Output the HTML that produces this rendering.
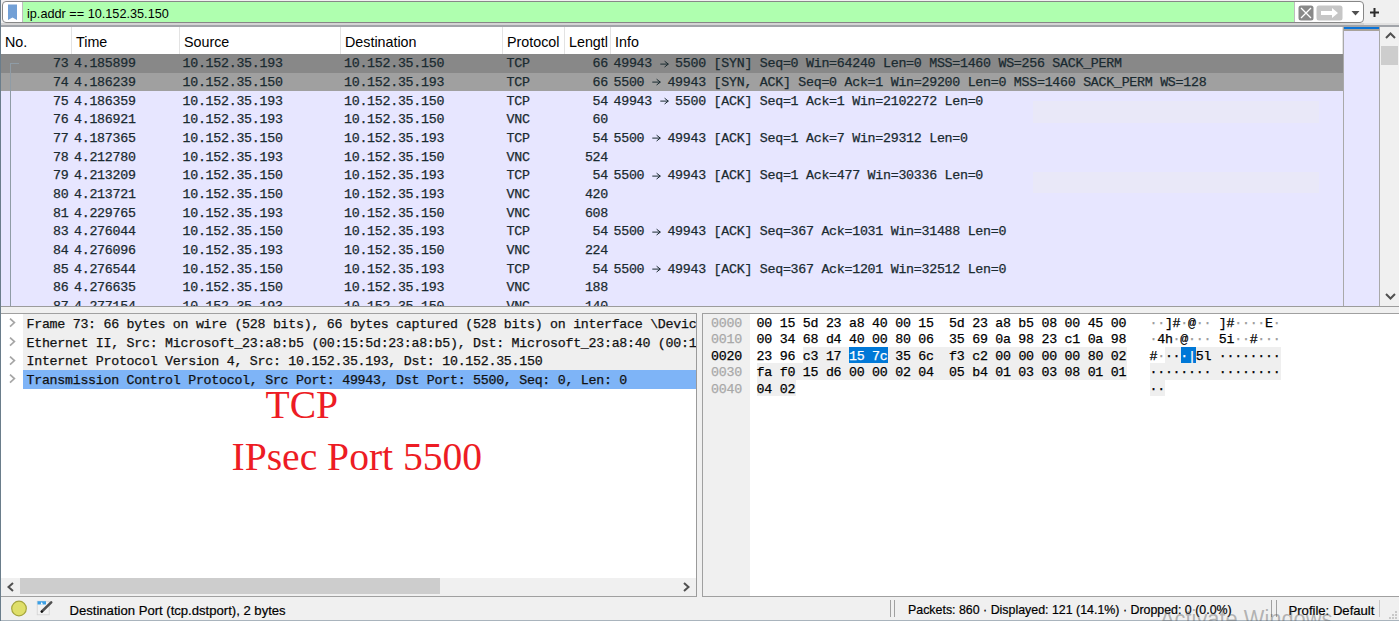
<!DOCTYPE html><html><head><meta charset="utf-8"><style>
*{margin:0;padding:0;box-sizing:border-box}
html,body{width:1399px;height:621px;overflow:hidden;background:#f0f0f0;position:relative}
body{font-family:"Liberation Sans",sans-serif;color:#000}
.a{position:absolute}
.m{position:absolute;font-family:"Liberation Mono",monospace;font-size:13.3px;white-space:pre;color:#1a2a30;letter-spacing:-0.28px;-webkit-text-stroke:0.25px currentColor}
.hc{position:absolute;top:0;height:27px;border-right:1px solid #e3e3e3;font-size:14.3px;line-height:31px;padding-left:4px;white-space:pre;overflow:hidden;color:#000}
.sb{position:absolute;font-size:13px;white-space:pre;color:#000;-webkit-text-stroke:0.2px currentColor}
</style></head><body>
<div class="a" style="left:0;top:0;width:1px;height:621px;background:#6a7d8b;z-index:5"></div>
<div class="a" style="left:2px;top:1px;width:1362px;height:22px;border:1px solid #878787;border-radius:4px;background:#fff;overflow:hidden">
<svg class="a" style="left:3.9px;top:1.8px" width="11" height="17" viewBox="0 0 11 17"><path d="M1 0.5 H10 V16 L5.5 13.4 L1 16 Z" fill="#72a0d6"/></svg>
<div class="a" style="left:19px;top:0;width:1273px;height:21px;background:#afffaf;border-left:1px solid #bdbdbd;border-right:1px solid #bdbdbd"></div>
<div class="a" style="left:24px;top:4.5px;font-size:12.7px;line-height:14px;white-space:pre;color:#000">ip.addr == 10.152.35.150</div>
<svg class="a" style="left:1295px;top:2.5px" width="16" height="16" viewBox="0 0 16 16"><rect x="0.5" y="0.5" width="15" height="15" rx="2.5" fill="#898989"/><path d="M3 3 L13 13 M13 3 L3 13" stroke="#fff" stroke-width="1.3"/></svg>
<svg class="a" style="left:1313px;top:2.5px" width="27" height="16" viewBox="0 0 27 16"><rect x="0.5" y="0.5" width="26" height="15" rx="2.5" fill="#c6c6c6"/><path d="M5 6 H16 V3 L22 8 L16 13 V10 H5 Z" fill="#fff"/></svg>
<svg class="a" style="left:1348px;top:8.5px" width="9" height="5" viewBox="0 0 9 5"><path d="M0.5 0 H8.5 L4.5 4.5 Z" fill="#505050"/></svg>
</div>
<svg class="a" style="left:1369px;top:7px" width="11" height="11" viewBox="0 0 11 11"><path d="M5.5 1 V10 M1 5.5 H10" stroke="#2b2b2b" stroke-width="2"/></svg>
<div class="a" style="left:1px;top:23px;width:1363px;height:2px;background:#d4d4d4"></div>
<div class="a" style="left:1364px;top:23px;width:35px;height:2px;background:#e2e2e2"></div>
<div class="a" style="left:1px;top:25px;width:1398px;height:282px;border-top:2px solid #a1a4a9;border-bottom:1px solid #9c9c9c;background:#e7e6ff;overflow:hidden">
<div class="a" style="left:0;top:0;width:1342px;height:27px;background:#fff">
<div class="hc" style="left:0px;width:71px">No.</div>
<div class="hc" style="left:71px;width:108px">Time</div>
<div class="hc" style="left:179px;width:161px">Source</div>
<div class="hc" style="left:340px;width:162px">Destination</div>
<div class="hc" style="left:502px;width:62px">Protocol</div>
<div class="hc" style="left:564px;width:46px">Lengtl</div>
<div class="hc" style="left:610px;width:732px">Info</div>
</div>
<div class="a" style="left:0;top:27.00px;width:1342px;height:18.69px;background:#888888;line-height:18.69px">
<div class="m" style="right:1274.5px;top:1.2px">73</div>
<div class="m" style="left:73.0px;top:1.2px">4.185899</div>
<div class="m" style="left:181.5px;top:1.2px">10.152.35.193</div>
<div class="m" style="left:343.0px;top:1.2px">10.152.35.150</div>
<div class="m" style="left:505.5px;top:1.2px">TCP</div>
<div class="m" style="right:735.0px;top:1.2px">66</div>
<div class="m" style="left:612.5px;top:1.2px">49943   5500 [SYN] Seq=0 Win=64240 Len=0 MSS=1460 WS=256 SACK_PERM</div>
<svg class="a" style="left:658.80px;top:5.6px" width="10" height="8" viewBox="0 0 10 8"><path d="M0.3 4.1 H8.3 M4.6 1.2 L8.3 4.1 L4.6 7" stroke="#1a2a30" stroke-width="1.0" fill="none"/></svg>
</div>
<div class="a" style="left:0;top:45.69px;width:1342px;height:18.69px;background:#a0a0a0;line-height:18.69px">
<div class="m" style="right:1274.5px;top:1.2px">74</div>
<div class="m" style="left:73.0px;top:1.2px">4.186239</div>
<div class="m" style="left:181.5px;top:1.2px">10.152.35.150</div>
<div class="m" style="left:343.0px;top:1.2px">10.152.35.193</div>
<div class="m" style="left:505.5px;top:1.2px">TCP</div>
<div class="m" style="right:735.0px;top:1.2px">66</div>
<div class="m" style="left:612.5px;top:1.2px">5500   49943 [SYN, ACK] Seq=0 Ack=1 Win=29200 Len=0 MSS=1460 SACK_PERM WS=128</div>
<svg class="a" style="left:651.10px;top:5.6px" width="10" height="8" viewBox="0 0 10 8"><path d="M0.3 4.1 H8.3 M4.6 1.2 L8.3 4.1 L4.6 7" stroke="#1a2a30" stroke-width="1.0" fill="none"/></svg>
</div>
<div class="a" style="left:0;top:64.38px;width:1342px;height:18.69px;background:transparent;line-height:18.69px">
<div class="m" style="right:1274.5px;top:1.2px">75</div>
<div class="m" style="left:73.0px;top:1.2px">4.186359</div>
<div class="m" style="left:181.5px;top:1.2px">10.152.35.193</div>
<div class="m" style="left:343.0px;top:1.2px">10.152.35.150</div>
<div class="m" style="left:505.5px;top:1.2px">TCP</div>
<div class="m" style="right:735.0px;top:1.2px">54</div>
<div class="m" style="left:612.5px;top:1.2px">49943   5500 [ACK] Seq=1 Ack=1 Win=2102272 Len=0</div>
<svg class="a" style="left:658.80px;top:5.6px" width="10" height="8" viewBox="0 0 10 8"><path d="M0.3 4.1 H8.3 M4.6 1.2 L8.3 4.1 L4.6 7" stroke="#1a2a30" stroke-width="1.0" fill="none"/></svg>
</div>
<div class="a" style="left:0;top:83.07px;width:1342px;height:18.69px;background:transparent;line-height:18.69px">
<div class="m" style="right:1274.5px;top:1.2px">76</div>
<div class="m" style="left:73.0px;top:1.2px">4.186921</div>
<div class="m" style="left:181.5px;top:1.2px">10.152.35.193</div>
<div class="m" style="left:343.0px;top:1.2px">10.152.35.150</div>
<div class="m" style="left:505.5px;top:1.2px">VNC</div>
<div class="m" style="right:735.0px;top:1.2px">60</div>
</div>
<div class="a" style="left:0;top:101.76px;width:1342px;height:18.69px;background:transparent;line-height:18.69px">
<div class="m" style="right:1274.5px;top:1.2px">77</div>
<div class="m" style="left:73.0px;top:1.2px">4.187365</div>
<div class="m" style="left:181.5px;top:1.2px">10.152.35.150</div>
<div class="m" style="left:343.0px;top:1.2px">10.152.35.193</div>
<div class="m" style="left:505.5px;top:1.2px">TCP</div>
<div class="m" style="right:735.0px;top:1.2px">54</div>
<div class="m" style="left:612.5px;top:1.2px">5500   49943 [ACK] Seq=1 Ack=7 Win=29312 Len=0</div>
<svg class="a" style="left:651.10px;top:5.6px" width="10" height="8" viewBox="0 0 10 8"><path d="M0.3 4.1 H8.3 M4.6 1.2 L8.3 4.1 L4.6 7" stroke="#1a2a30" stroke-width="1.0" fill="none"/></svg>
</div>
<div class="a" style="left:0;top:120.45px;width:1342px;height:18.69px;background:transparent;line-height:18.69px">
<div class="m" style="right:1274.5px;top:1.2px">78</div>
<div class="m" style="left:73.0px;top:1.2px">4.212780</div>
<div class="m" style="left:181.5px;top:1.2px">10.152.35.193</div>
<div class="m" style="left:343.0px;top:1.2px">10.152.35.150</div>
<div class="m" style="left:505.5px;top:1.2px">VNC</div>
<div class="m" style="right:735.0px;top:1.2px">524</div>
</div>
<div class="a" style="left:0;top:139.14px;width:1342px;height:18.69px;background:transparent;line-height:18.69px">
<div class="m" style="right:1274.5px;top:1.2px">79</div>
<div class="m" style="left:73.0px;top:1.2px">4.213209</div>
<div class="m" style="left:181.5px;top:1.2px">10.152.35.150</div>
<div class="m" style="left:343.0px;top:1.2px">10.152.35.193</div>
<div class="m" style="left:505.5px;top:1.2px">TCP</div>
<div class="m" style="right:735.0px;top:1.2px">54</div>
<div class="m" style="left:612.5px;top:1.2px">5500   49943 [ACK] Seq=1 Ack=477 Win=30336 Len=0</div>
<svg class="a" style="left:651.10px;top:5.6px" width="10" height="8" viewBox="0 0 10 8"><path d="M0.3 4.1 H8.3 M4.6 1.2 L8.3 4.1 L4.6 7" stroke="#1a2a30" stroke-width="1.0" fill="none"/></svg>
</div>
<div class="a" style="left:0;top:157.83px;width:1342px;height:18.69px;background:transparent;line-height:18.69px">
<div class="m" style="right:1274.5px;top:1.2px">80</div>
<div class="m" style="left:73.0px;top:1.2px">4.213721</div>
<div class="m" style="left:181.5px;top:1.2px">10.152.35.150</div>
<div class="m" style="left:343.0px;top:1.2px">10.152.35.193</div>
<div class="m" style="left:505.5px;top:1.2px">VNC</div>
<div class="m" style="right:735.0px;top:1.2px">420</div>
</div>
<div class="a" style="left:0;top:176.52px;width:1342px;height:18.69px;background:transparent;line-height:18.69px">
<div class="m" style="right:1274.5px;top:1.2px">81</div>
<div class="m" style="left:73.0px;top:1.2px">4.229765</div>
<div class="m" style="left:181.5px;top:1.2px">10.152.35.193</div>
<div class="m" style="left:343.0px;top:1.2px">10.152.35.150</div>
<div class="m" style="left:505.5px;top:1.2px">VNC</div>
<div class="m" style="right:735.0px;top:1.2px">608</div>
</div>
<div class="a" style="left:0;top:195.21px;width:1342px;height:18.69px;background:transparent;line-height:18.69px">
<div class="m" style="right:1274.5px;top:1.2px">83</div>
<div class="m" style="left:73.0px;top:1.2px">4.276044</div>
<div class="m" style="left:181.5px;top:1.2px">10.152.35.150</div>
<div class="m" style="left:343.0px;top:1.2px">10.152.35.193</div>
<div class="m" style="left:505.5px;top:1.2px">TCP</div>
<div class="m" style="right:735.0px;top:1.2px">54</div>
<div class="m" style="left:612.5px;top:1.2px">5500   49943 [ACK] Seq=367 Ack=1031 Win=31488 Len=0</div>
<svg class="a" style="left:651.10px;top:5.6px" width="10" height="8" viewBox="0 0 10 8"><path d="M0.3 4.1 H8.3 M4.6 1.2 L8.3 4.1 L4.6 7" stroke="#1a2a30" stroke-width="1.0" fill="none"/></svg>
</div>
<div class="a" style="left:0;top:213.90px;width:1342px;height:18.69px;background:transparent;line-height:18.69px">
<div class="m" style="right:1274.5px;top:1.2px">84</div>
<div class="m" style="left:73.0px;top:1.2px">4.276096</div>
<div class="m" style="left:181.5px;top:1.2px">10.152.35.193</div>
<div class="m" style="left:343.0px;top:1.2px">10.152.35.150</div>
<div class="m" style="left:505.5px;top:1.2px">VNC</div>
<div class="m" style="right:735.0px;top:1.2px">224</div>
</div>
<div class="a" style="left:0;top:232.59px;width:1342px;height:18.69px;background:transparent;line-height:18.69px">
<div class="m" style="right:1274.5px;top:1.2px">85</div>
<div class="m" style="left:73.0px;top:1.2px">4.276544</div>
<div class="m" style="left:181.5px;top:1.2px">10.152.35.150</div>
<div class="m" style="left:343.0px;top:1.2px">10.152.35.193</div>
<div class="m" style="left:505.5px;top:1.2px">TCP</div>
<div class="m" style="right:735.0px;top:1.2px">54</div>
<div class="m" style="left:612.5px;top:1.2px">5500   49943 [ACK] Seq=367 Ack=1201 Win=32512 Len=0</div>
<svg class="a" style="left:651.10px;top:5.6px" width="10" height="8" viewBox="0 0 10 8"><path d="M0.3 4.1 H8.3 M4.6 1.2 L8.3 4.1 L4.6 7" stroke="#1a2a30" stroke-width="1.0" fill="none"/></svg>
</div>
<div class="a" style="left:0;top:251.28px;width:1342px;height:18.69px;background:transparent;line-height:18.69px">
<div class="m" style="right:1274.5px;top:1.2px">86</div>
<div class="m" style="left:73.0px;top:1.2px">4.276635</div>
<div class="m" style="left:181.5px;top:1.2px">10.152.35.150</div>
<div class="m" style="left:343.0px;top:1.2px">10.152.35.193</div>
<div class="m" style="left:505.5px;top:1.2px">VNC</div>
<div class="m" style="right:735.0px;top:1.2px">188</div>
</div>
<div class="a" style="left:0;top:269.97px;width:1342px;height:18.69px;background:transparent;line-height:18.69px">
<div class="m" style="right:1274.5px;top:1.2px">87</div>
<div class="m" style="left:73.0px;top:1.2px">4.277154</div>
<div class="m" style="left:181.5px;top:1.2px">10.152.35.193</div>
<div class="m" style="left:343.0px;top:1.2px">10.152.35.150</div>
<div class="m" style="left:505.5px;top:1.2px">VNC</div>
<div class="m" style="right:735.0px;top:1.2px">140</div>
</div>
<div class="a" style="left:9px;top:36px;width:9px;height:1px;background:#8f9ca6"></div>
<div class="a" style="left:9px;top:36.5px;width:1px;height:250px;background:#8f9ca6"></div>
<div class="a" style="left:1032px;top:74px;width:286px;height:22px;background:#e9e8f8"></div>
<div class="a" style="left:1032px;top:144.5px;width:286px;height:21px;background:#e9e8f8"></div>
<div class="a" style="left:1342px;top:0;width:37px;height:279px;background:#e7e6ff;border-left:1px solid #a9a9a9;border-right:1px solid #a9a9a9"></div>
<div class="a" style="left:1343px;top:0;width:35px;height:2px;background:#0a74d8"></div>
<div class="a" style="left:1343px;top:2px;width:35px;height:1.5px;background:#a8a29b"></div>
<div class="a" style="left:1379px;top:0;width:19px;height:279px;background:#f0f0f0"></div>
<svg class="a" style="left:1384px;top:5px" width="11" height="7" viewBox="0 0 11 7"><path d="M1 6 L5.5 1.5 L10 6" stroke="#505050" stroke-width="2" fill="none"/></svg>
<div class="a" style="left:1380px;top:18.5px;width:17px;height:19.5px;background:#cdcdcd"></div>
<svg class="a" style="left:1384px;top:266px" width="11" height="7" viewBox="0 0 11 7"><path d="M1 1 L5.5 5.5 L10 1" stroke="#505050" stroke-width="2" fill="none"/></svg>
</div>
<div class="a" style="left:0;top:313px;width:697px;height:284px;border:1px solid #a0a0a0;border-right-color:#9a9a9a;background:#fff;overflow:hidden">
<div class="a" style="left:22px;top:-0.20px;width:680px;height:18.69px;background:#efefef"></div>
<svg class="a" style="left:8px;top:4.30px" width="8" height="11" viewBox="0 0 8 11"><path d="M1 0.6 L5.4 4.6 L1 8.6" stroke="#a6a6a6" stroke-width="1.7" fill="none"/></svg>
<div class="m" style="left:25.5px;top:2.00px;line-height:18.69px;color:#111">Frame 73: 66 bytes on wire (528 bits), 66 bytes captured (528 bits) on interface \Device\NPF_{3D0C}, id 0</div>
<div class="a" style="left:22px;top:18.49px;width:680px;height:18.69px;background:#efefef"></div>
<svg class="a" style="left:8px;top:22.99px" width="8" height="11" viewBox="0 0 8 11"><path d="M1 0.6 L5.4 4.6 L1 8.6" stroke="#a6a6a6" stroke-width="1.7" fill="none"/></svg>
<div class="m" style="left:25.5px;top:20.69px;line-height:18.69px;color:#111">Ethernet II, Src: Microsoft_23:a8:b5 (00:15:5d:23:a8:b5), Dst: Microsoft_23:a8:40 (00:15:5d:23:a8:40)</div>
<div class="a" style="left:22px;top:37.18px;width:680px;height:18.69px;background:#efefef"></div>
<svg class="a" style="left:8px;top:41.68px" width="8" height="11" viewBox="0 0 8 11"><path d="M1 0.6 L5.4 4.6 L1 8.6" stroke="#a6a6a6" stroke-width="1.7" fill="none"/></svg>
<div class="m" style="left:25.5px;top:39.38px;line-height:18.69px;color:#111">Internet Protocol Version 4, Src: 10.152.35.193, Dst: 10.152.35.150</div>
<div class="a" style="left:22px;top:55.87px;width:680px;height:18.69px;background:#7eb4f7"></div>
<svg class="a" style="left:8px;top:60.37px" width="8" height="11" viewBox="0 0 8 11"><path d="M1 0.6 L5.4 4.6 L1 8.6" stroke="#a6a6a6" stroke-width="1.7" fill="none"/></svg>
<div class="m" style="left:25.5px;top:58.07px;line-height:18.69px;color:#111">Transmission Control Protocol, Src Port: 49943, Dst Port: 5500, Seq: 0, Len: 0</div>
<div class="a" style="left:264.5px;top:68.5px;font-family:'Liberation Serif',serif;font-size:39.6px;line-height:45px;color:#ed1c24;white-space:pre">TCP</div>
<div class="a" style="left:230.5px;top:121px;font-family:'Liberation Serif',serif;font-size:39.6px;line-height:45px;color:#ed1c24;white-space:pre">IPsec Port 5500</div>
<div class="a" style="left:0;top:264px;width:695px;height:18px;background:#f0f0f0"></div>
<div class="a" style="left:19px;top:264px;width:420px;height:16px;background:#cdcdcd"></div>
<svg class="a" style="left:6px;top:268px" width="7" height="10" viewBox="0 0 7 10"><path d="M6 1 L1.5 5 L6 9" stroke="#505050" stroke-width="2" fill="none"/></svg>
<svg class="a" style="left:682px;top:268px" width="7" height="10" viewBox="0 0 7 10"><path d="M1 1 L5.5 5 L1 9" stroke="#505050" stroke-width="2" fill="none"/></svg>
</div>
<div class="a" style="left:702px;top:313px;width:697px;height:284px;border:1px solid #a0a0a0;border-right:none;background:#fff;overflow:hidden">
<div class="a" style="left:0;top:0;width:47px;height:282px;background:#f0f0f0"></div>
<div class="a" style="left:100.20px;top:32.80px;width:323.40px;height:16.45px;background:#efefef"></div>
<div class="a" style="left:54.00px;top:49.25px;width:369.60px;height:16.45px;background:#efefef"></div>
<div class="a" style="left:54.00px;top:65.70px;width:38.50px;height:16.45px;background:#efefef"></div>
<div class="a" style="left:462.20px;top:32.80px;width:115.50px;height:16.45px;background:#efefef"></div>
<div class="a" style="left:446.80px;top:49.25px;width:130.90px;height:16.45px;background:#efefef"></div>
<div class="a" style="left:446.80px;top:65.70px;width:15.40px;height:16.45px;background:#efefef"></div>
<div class="a" style="left:146.40px;top:32.80px;width:38.50px;height:16.45px;background:#0078d7"></div>
<div class="a" style="left:477.60px;top:32.80px;width:15.40px;height:16.45px;background:#0078d7"></div>
<div class="m" style="left:8.10px;top:1.90px;line-height:16.45px;color:#a8a8a8">0000</div>
<div class="m" style="left:53.60px;top:1.90px;line-height:16.45px;color:#000">00 15 5d 23 a8 40 00 15  5d 23 a8 b5 08 00 45 00</div>
<div class="m" style="left:446.50px;top:1.90px;line-height:16.45px;color:#000"><span style="color:#9a9a9a">·</span><span style="color:#9a9a9a">·</span>]#<span style="color:#9a9a9a">·</span>@<span style="color:#9a9a9a">·</span><span style="color:#9a9a9a">·</span> ]#<span style="color:#9a9a9a">·</span><span style="color:#9a9a9a">·</span><span style="color:#9a9a9a">·</span><span style="color:#9a9a9a">·</span>E<span style="color:#9a9a9a">·</span></div>
<div class="m" style="left:8.10px;top:18.35px;line-height:16.45px;color:#a8a8a8">0010</div>
<div class="m" style="left:53.60px;top:18.35px;line-height:16.45px;color:#000">00 34 68 d4 40 00 80 06  35 69 0a 98 23 c1 0a 98</div>
<div class="m" style="left:446.50px;top:18.35px;line-height:16.45px;color:#000"><span style="color:#9a9a9a">·</span>4h<span style="color:#9a9a9a">·</span>@<span style="color:#9a9a9a">·</span><span style="color:#9a9a9a">·</span><span style="color:#9a9a9a">·</span> 5i<span style="color:#9a9a9a">·</span><span style="color:#9a9a9a">·</span>#<span style="color:#9a9a9a">·</span><span style="color:#9a9a9a">·</span><span style="color:#9a9a9a">·</span></div>
<div class="m" style="left:8.10px;top:34.80px;line-height:16.45px;color:#000">0020</div>
<div class="m" style="left:53.60px;top:34.80px;line-height:16.45px;color:#000">23 96 c3 17 <span style="color:#fff">15 7c</span> 35 6c  f3 c2 00 00 00 00 80 02</div>
<div class="m" style="left:446.50px;top:34.80px;line-height:16.45px;color:#000">#<span style="color:#9a9a9a">·</span>··<span style="color:#fff">·|</span>5l ········</div>
<div class="m" style="left:8.10px;top:51.25px;line-height:16.45px;color:#a8a8a8">0030</div>
<div class="m" style="left:53.60px;top:51.25px;line-height:16.45px;color:#000">fa f0 15 d6 00 00 02 04  05 b4 01 03 03 08 01 01</div>
<div class="m" style="left:446.50px;top:51.25px;line-height:16.45px;color:#000">········ ········</div>
<div class="m" style="left:8.10px;top:67.70px;line-height:16.45px;color:#a8a8a8">0040</div>
<div class="m" style="left:53.60px;top:67.70px;line-height:16.45px;color:#000">04 02</div>
<div class="m" style="left:446.50px;top:67.70px;line-height:16.45px;color:#000">··</div>
</div>
<div class="a" style="left:0;top:620px;width:1399px;height:1px;background:#a9b4bd"></div>
<svg class="a" style="left:10px;top:600px" width="18" height="18" viewBox="0 0 18 18"><circle cx="9" cy="8.5" r="7.3" fill="#dfdf6a" stroke="#a5a53c" stroke-width="1.2"/></svg>
<svg class="a" style="left:36px;top:600px" width="18" height="17" viewBox="0 0 18 17"><rect x="1.2" y="1.2" width="12" height="13.6" fill="#f2f2f2" stroke="#d2d2d2" stroke-width="0.8"/><path d="M1.5 1.2 H10 V4.5 H1.5 Z" fill="#3ba0e6"/><path d="M4.5 4.5 L5.8 1.8 L7 4.5 Z" fill="#fff"/><path d="M5.8 11.5 L15.2 2.4" stroke="#505050" stroke-width="2.6" stroke-linecap="round"/><path d="M5.2 12.3 L6.5 10.8" stroke="#111" stroke-width="2"/></svg>
<div class="sb" style="left:69.5px;top:603px;font-size:13.1px">Destination Port (tcp.dstport), 2 bytes</div>
<div class="a" style="left:890px;top:600px;width:1px;height:17px;background:#a0a0a0"></div>
<div class="a" style="left:894px;top:600px;width:1px;height:17px;background:#a0a0a0"></div>
<div class="sb" style="left:908px;top:603px;font-size:12.4px">Packets: 860 · Displayed: 121 (14.1%) · Dropped: 0 (0.0%)</div>
<div class="a" style="left:1271px;top:600px;width:1px;height:17px;background:#a0a0a0"></div>
<div class="a" style="left:1276px;top:600px;width:1px;height:17px;background:#a0a0a0"></div>
<div class="sb" style="left:1288.5px;top:603px;font-size:13.1px">Profile: Default</div>
<div class="a" style="left:1379px;top:600px;width:1px;height:17px;background:#c8c8c8"></div>
<div class="a" style="left:1160px;top:606px;font-size:23px;line-height:26px;color:rgba(90,90,90,0.42);white-space:pre;z-index:10;transform:scaleX(0.95);transform-origin:0 0">Activate Windows</div>
<div class="a" style="left:1395px;top:611px;width:1.5px;height:1.5px;background:#c8c8c8"></div>
<div class="a" style="left:1392px;top:614px;width:1.5px;height:1.5px;background:#c8c8c8"></div>
<div class="a" style="left:1395px;top:614px;width:1.5px;height:1.5px;background:#c8c8c8"></div>
<div class="a" style="left:1389px;top:617px;width:1.5px;height:1.5px;background:#c8c8c8"></div>
<div class="a" style="left:1392px;top:617px;width:1.5px;height:1.5px;background:#c8c8c8"></div>
<div class="a" style="left:1395px;top:617px;width:1.5px;height:1.5px;background:#c8c8c8"></div>
</body></html>
